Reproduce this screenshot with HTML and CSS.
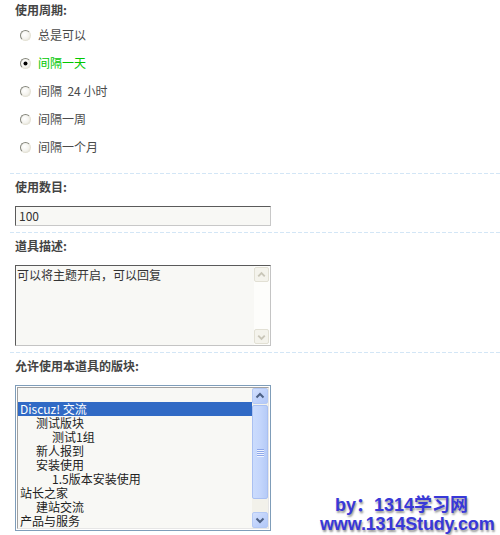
FILE: index.html
```html
<!DOCTYPE html>
<html lang="zh-CN">
<head>
<meta charset="utf-8">
<title>道具设置</title>
<link rel="stylesheet" href="styles.css">
</head>
<body>
<div class="page">
  <section class="sect sect-first">
    <div class="label">使用周期:</div>
    <ul class="radios">
      <li class="radio-row"><span class="radio"></span><span class="rtext">总是可以</span></li>
      <li class="radio-row"><span class="radio checked"></span><span class="rtext on">间隔一天</span></li>
      <li class="radio-row"><span class="radio"></span><span class="rtext">间隔&nbsp; 24 小时</span></li>
      <li class="radio-row"><span class="radio"></span><span class="rtext">间隔一周</span></li>
      <li class="radio-row"><span class="radio"></span><span class="rtext">间隔一个月</span></li>
    </ul>
  </section>
  <section class="sect">
    <div class="label">使用数目:</div>
    <div class="textbox">100</div>
  </section>
  <section class="sect">
    <div class="label">道具描述:</div>
    <div class="textarea">
      <div class="ta-text">可以将主题开启，可以回复</div>
      <div class="sb sb-off">
        <div class="sb-btn"><svg width="14" height="14" viewBox="0 0 14 14"><path d="M3.5 8.5 L7 5 L10.5 8.5" fill="none" stroke="#c9c6b8" stroke-width="2"/></svg></div>
        <div class="sb-track"></div>
        <div class="sb-btn"><svg width="14" height="14" viewBox="0 0 14 14"><path d="M3.5 5.5 L7 9 L10.5 5.5" fill="none" stroke="#c9c6b8" stroke-width="2"/></svg></div>
      </div>
    </div>
  </section>
  <section class="sect sect-last">
    <div class="label">允许使用本道具的版块:</div>
    <div class="listbox">
      <div class="lb-inner">
        <ul class="lb-items">
          <li class="opt"></li>
          <li class="opt sel">Discuz! 交流</li>
          <li class="opt lv1">测试版块</li>
          <li class="opt lv2">测试1组</li>
          <li class="opt lv1">新人报到</li>
          <li class="opt lv1">安装使用</li>
          <li class="opt lv2">1.5版本安装使用</li>
          <li class="opt">站长之家</li>
          <li class="opt lv1">建站交流</li>
          <li class="opt">产品与服务</li>
        </ul>
        <div class="sb sb-blue">
          <div class="sb-btn"><svg width="14" height="14" viewBox="0 0 14 14"><path d="M3.5 8.5 L7 5 L10.5 8.5" fill="none" stroke="#4d6185" stroke-width="2"/></svg></div>
          <div class="sb-thumb"><span class="grip"></span><span class="grip"></span><span class="grip"></span><span class="grip"></span></div>
          <div class="sb-track"></div>
          <div class="sb-btn"><svg width="14" height="14" viewBox="0 0 14 14"><path d="M3.5 5.5 L7 9 L10.5 5.5" fill="none" stroke="#4d6185" stroke-width="2"/></svg></div>
        </div>
      </div>
    </div>
  </section>
  <div class="watermark">
    <div class="wm-line wm-by">by：1314学习网</div>
    <div class="wm-line wm-url">www.1314Study.com</div>
  </div>
</div>
</body>
</html>
```
FILE: styles.css
```css
* { box-sizing: border-box; }
html, body { margin: 0; padding: 0; background: #fff; }
body {
  font-family: "Noto Sans CJK SC", "Liberation Sans", sans-serif;
  font-size: 12px;
  color: #444;
}
.page { position: relative; width: 500px; height: 535px; overflow: hidden; }

.sect {
  margin-left: 10px;
  padding: 5px 0 0 5px;
}
.sect::after {
  content: "";
  display: block;
  height: 1px;
  margin: 6px 0 0 -5px;
  background: repeating-linear-gradient(90deg, #d3e6f6 0 4px, transparent 4px 6px);
}
.sect-first { padding-top: 2px; }
.sect-first::after { margin-top: 12px; }
.sect-last::after { display: none; }

.label {
  font-weight: bold;
  line-height: 16px;
  height: 16px;
  color: #444;
  margin-bottom: 11px;
}
.sect-first .label { margin-bottom: 3px; }

.radios { list-style: none; margin: 0; padding: 0; }
.radio-row {
  display: flex;
  align-items: center;
  height: 28px;
}
.radio {
  width: 11px;
  height: 11px;
  margin-left: 5px;
  margin-right: 7px;
  border-radius: 50%;
  border: 1px solid;
  border-color: #85867c #e4e2d6 #e4e2d6 #85867c;
  background: radial-gradient(circle at 40% 40%, #ffffff 0, #f4f3ee 55%, #dcdbd0 100%);
  position: relative;
  flex: none;
}
.radio.checked::after {
  content: "";
  position: absolute;
  left: 3px;
  top: 3px;
  width: 3px;
  height: 3px;
  border-radius: 50%;
  background: #000;
  box-shadow: 0 0 0 0.5px #000;
}
.rtext { line-height: 16px; color: #4a4a4a; }
.rtext.on { color: #00c800; }

.textbox {
  width: 256px;
  height: 20px;
  border: 1px solid;
  border-color: #5a5a5a #c8c8c8 #c8c8c8 #5a5a5a;
  background: #f8f8f5;
  padding: 0 3px;
  line-height: 18px;
  color: #333;
}

.textarea {
  display: flex;
  width: 256px;
  height: 81px;
  border: 1px solid;
  border-color: #5a5a5a #c4c4c4 #c4c4c4 #5a5a5a;
  background: #f8f8f5;
}
.ta-text {
  flex: 1;
  padding: 1px 1px;
  line-height: 16px;
  color: #333;
}

.sb {
  width: 16px;
  display: flex;
  flex-direction: column;
  flex: none;
}
.sb-btn {
  width: 16px;
  height: 16px;
  display: flex;
  align-items: center;
  justify-content: center;
  border-radius: 2px;
  flex: none;
}
.sb-track { flex: 1; }

.sb-off { padding: 1px 1px 1px 0; background: #fdfdfb; }
.sb-off .sb-btn {
  width: 15px;
  height: 15px;
  background: #f4f3ec;
  border: 1px solid #e2e0d4;
}
.sb-off .sb-track { background: #fdfdfb; }

.listbox {
  width: 256px;
  height: 146px;
  border: 1px solid #7f9db9;
  padding: 1px;
  background: #fff;
}
.lb-inner {
  display: flex;
  height: 100%;
  border: 1px solid;
  border-color: #a0a0a0 #e6e6e6 #e6e6e6 #a0a0a0;
  background: #f8f8f5;
}
.lb-items {
  list-style: none;
  margin: 0;
  padding: 0;
  flex: 1;
  overflow: hidden;
}
.opt {
  height: 14px;
  line-height: 14px;
  padding-left: 2px;
  color: #222;
  white-space: nowrap;
}
.opt.sel { background: #316ac5; color: #fff; }
.opt.lv1 { padding-left: 18px; }
.opt.lv2 { padding-left: 34px; }

.sb-blue { background: #f2f1ea; }
.sb-blue .sb-btn {
  background: linear-gradient(135deg, #d3e0fd 0%, #c1d3fb 50%, #b2c8f8 100%);
  border: 1px solid #b4c9f5;
}
.sb-thumb {
  height: 94px;
  flex: none;
  margin-top: 1px;
  border: 1px solid #a9c0f2;
  border-radius: 2px;
  background: linear-gradient(90deg, #cbdcfd 0%, #c4d6fc 50%, #b6cbf7 100%);
  display: flex;
  flex-direction: column;
  align-items: center;
  justify-content: center;
  gap: 1px;
}
.grip {
  display: block;
  width: 7px;
  height: 1px;
  background: #8ea8ea;
  box-shadow: 0 1px 0 #eef3ff;
}
.sb-blue .sb-track { background: #f2f1ea; }

.watermark {
  position: absolute;
  left: 318px;
  top: 496px;
  width: 182px;
}
.wm-line {
  font-family: "Liberation Sans", "Noto Sans CJK SC", sans-serif;
  font-weight: bold;
  font-size: 18px;
  color: #3838d8;
  text-shadow: 1px 2px 2px #9a9a9a;
  white-space: nowrap;
}
.wm-by { padding-left: 17px; line-height: 19px; }
.wm-url { padding-left: 2px; line-height: 19px; letter-spacing: -0.15px; }
```
